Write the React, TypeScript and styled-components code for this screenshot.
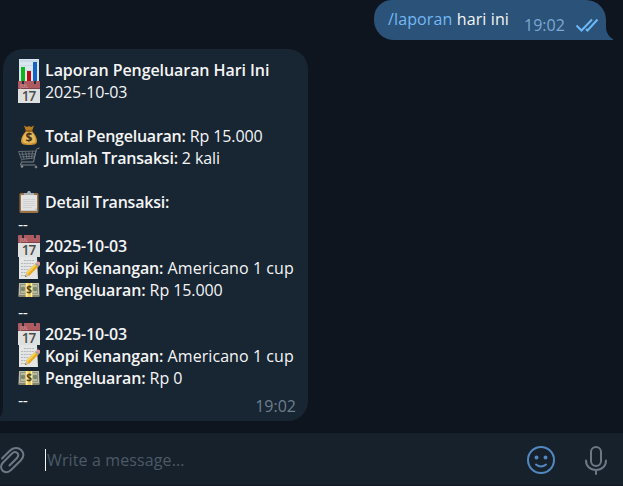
import React from "react";
import styled, { createGlobalStyle } from "styled-components";

const GlobalStyle = createGlobalStyle`
  * { box-sizing: border-box; }
  body { margin: 0; background: #0e151f; overflow: hidden; }
`;

const Window = styled.div`
  display: flex;
  flex-direction: column;
  width: 623px;
  height: 486px;
  background: #0e151f;
  color: #f5f5f5;
  font: 16px/22px "Open Sans", sans-serif;
  overflow: hidden;
`;

const History = styled.main`
  display: flex;
  flex-direction: column;
  gap: 9px;
  height: 432px;
  flex: none;
`;

const Outgoing = styled.div`
  position: relative;
  align-self: flex-end;
  display: flex;
  width: 232px;
  height: 40px;
  margin-right: 17px;
  padding: 8px 9px 0 14px;
  background: #2b5278;
  border-radius: 18px 20px 0 20px;
  white-space: pre;
  letter-spacing: 0.12px;
`;

const Command = styled.span`
  color: #73b9f5;
`;

const Time = styled.time<{ $out?: boolean }>`
  color: ${(p) => (p.$out ? "#7da8d3" : "#6d7f8f")};
  letter-spacing: 0;
  margin: ${(p) => (p.$out ? "6px 0 0 15px" : "0")};
`;

const Checks = styled.svg`
  flex: none;
  width: 24px;
  height: 16px;
  margin: 9px 0 0 10px;
`;

const Tail = styled.svg<{ $side: "left" | "right" }>`
  position: absolute;
  bottom: 0;
  width: 8px;
  height: 14px;
  ${(p) => (p.$side === "right" ? "left: 100%;" : "right: 100%; transform: scaleX(-1);")}
`;

const Incoming = styled.article`
  position: relative;
  width: 305px;
  height: 372px;
  margin-left: 3px;
  padding: 10px 15px 0 15px;
  background: #182533;
  border-radius: 20px 20px 20px 0;
`;

const Line = styled.div`
  display: flex;
  align-items: center;
  height: 22px;
  white-space: pre;
`;

const LastLine = styled(Line)`
  justify-content: space-between;
`;

const Stamp = styled.div`
  align-self: flex-start;
  margin: 6px -3px 0 0;
`;

const Strong = styled.strong<{ $track?: number }>`
  font-weight: 600;
  letter-spacing: ${(p) => p.$track ?? 0}px;
`;

const Plain = styled.span<{ $track?: number }>`
  letter-spacing: ${(p) => p.$track ?? 0}px;
`;

const Emoji = styled.svg`
  flex: none;
  width: 22px;
  height: 22px;
  margin-right: 5px;
`;

const Composer = styled.footer`
  display: flex;
  align-items: center;
  height: 54px;
  padding-top: 2px;
  background: #17212b;
  border-top: 1px solid #0c131b;
  border-bottom: 1px solid #101923;
`;

const Field = styled.div`
  flex: 1;
  display: flex;
  align-items: center;
  margin-left: 20px;
  color: #4b5967;
  letter-spacing: 0.12px;
`;

const Caret = styled.i`
  width: 1px;
  height: 22px;
  margin-right: 1px;
  background: #f5f5f5;
`;

const ToolIcon = styled.svg<{ $w: number; $tone: string; $end?: number }>`
  flex: none;
  width: ${(p) => p.$w}px;
  height: 30px;
  margin-right: ${(p) => p.$end ?? 0}px;
  fill: none;
  stroke: ${(p) => p.$tone};
  stroke-width: 2;
  stroke-linecap: round;
  stroke-linejoin: round;
`;

const Chart = () => (
  <Emoji viewBox="0 0 22 22">
    <path fill="#d9e5ef" d="M1 0h20v22H1z" />
    <path fill="#b5cbe0" d="M2 1h18v2H2zM2 6h18v1H2zM2 11h18v1H2z" opacity=".5" />
    <path fill="#0fb51c" d="M3 8h4v14H3z" />
    <path fill="#b80d16" d="M9 12h4v10H9z" />
    <path fill="#1264c4" d="M15 3h4v19h-4z" />
  </Emoji>
);

const CalendarDay = () => (
  <Emoji viewBox="0 0 22 22">
    <path fill="#dedfdf" d="M0 7h22v15H0z" />
    <path fill="#ad5b60" d="M0 1q0-1 1-1h20q1 0 1 1v7H0z" />
    <path fill="#854149" d="M0 7h22v1H0z" />
    <path fill="#252b35" d="M4 0h2v3H4zM16 0h2v3h-2z" />
    <text x="2" y="6.8" fontFamily="Open Sans" fontSize="5" fontWeight="600" fill="#d0979a">JUL</text>
    <text x="10.6" y="19.5" textAnchor="middle" fontFamily="Open Sans" fontSize="13.5" fontWeight="600" letterSpacing="-1" fill="#4b4b4b">17</text>
  </Emoji>
);

const MoneyBag = () => (
  <Emoji viewBox="0 0 22 22">
    <path fill="#b97d20" d="M6 .5l3 1.500 2-1 2 1 3-1.500-2 5.500H8z" />
    <path fill="#c98f30" d="M8 6h6c3 3 5 7 5 10 0 3-2 4-8 4s-8-1-8-4c0-3 2-7 5-10z" />
    <path fill="#e5b858" d="M8.500 7h5c3 3 4 6 4 8.500 0 2-2 3-6.500 3s-6.500-1-6.500-3c0-3 1-6 4-8.500z" />
    <path stroke="#815014" strokeWidth="1.2" d="M7 6h8" />
    <text x="11" y="17" textAnchor="middle" fontFamily="Open Sans" fontSize="12" fontWeight="700" fill="#46341d">$</text>
  </Emoji>
);

const Cart = () => (
  <Emoji viewBox="0 0 22 22" fill="none" stroke="#747b82" strokeWidth=".8">
    <path stroke="#969ca0" d="M21.5 1l-3 1-3 13H3.5l-1 3h15" />
    <path d="M.5 4.5l3 8L16 11l2-7zM1.5 7.3l15.500-.6M2.5 10l14-1M4 4.500l2 7.500M7.500 4.500L9 12M11 4.500v7.500M14.500 4l-1 7.500" />
    <path stroke="#684c47" d="M17 4l2-2M3 15l1-2" />
    <circle cx="4" cy="19.500" r="1" fill="#aaa" />
    <circle cx="18" cy="20" r="1" fill="#aaa" />
  </Emoji>
);

const Clipboard = () => (
  <Emoji viewBox="0 0 22 22">
    <rect x="1.500" y="2" width="19" height="20" rx="1.500" fill="#9b7242" />
    <path fill="#e2e2e2" d="M3 4h16v16H3z" />
    <path fill="#c6c8ca" d="M3 19h13l3-3v4H3z" />
    <path fill="#a8afb5" d="M6 2h3l1-2h2l1 2h3v2H6z" />
    <path stroke="#d0d1d3" d="M5 8.500h12M5 10.500h12M5 12.500h12M5 14.500h12M5 16.500h9" />
  </Emoji>
);

const Memo = () => (
  <Emoji viewBox="0 0 22 22">
    <path fill="#e4e5e5" d="M1 0h18l1 22H1z" />
    <path stroke="#a9adaf" strokeWidth=".8" strokeDasharray="2 .7" d="M6 3.500h10M3 6.500h13M3 9.500h11M3 12.500h8M3 15.500h5M3 18.500h4" />
    <path fill="#e7ad21" d="M8 16L18 6l3 3-10 10z" />
    <path fill="#ffd45a" d="M8.500 16L18 6.500l1 1L9.500 17z" />
    <path fill="#e59a9d" d="M18 6l1.500-1.500q1.500-.5 2.500 1t-.5 3L21 9z" />
    <path fill="#93a2ab" d="M17 7l1-1 3 3-1 1z" />
    <path fill="#d8b78a" d="M8 16l-1 4 4-1z" />
    <path fill="#4d4540" d="M7.500 18.500L7 20l1.500-.5z" />
  </Emoji>
);

const Cash = () => (
  <Emoji viewBox="0 0 22 22">
    <path fill="#b9bba5" d="M1 4h20l.5 13H.5z" />
    <path fill="#85886f" d="M.5 16h21v2H.5z" />
    <path fill="none" stroke="#858c75" strokeWidth=".8" d="M2.500 5.500h17v9h-17z" />
    <circle cx="5" cy="10" r="2.300" fill="#7b8570" />
    <circle cx="17" cy="10" r="2.300" fill="#7b8570" />
    <path fill="#eccb5c" d="M7.500 4h7v14h-7z" />
    <path fill="#fff0a7" d="M8 4h1.500v14H8zM13 4h1v14h-1z" />
    <text x="11" y="14" textAnchor="middle" fontFamily="Open Sans" fontSize="10" fontWeight="700" fill="#514424">$</text>
  </Emoji>
);

const BubbleTail = ({ side, fill }: { side: "left" | "right"; fill: string }) => (
  <Tail $side={side} viewBox="0 0 8 14">
    <path fill={fill} d="M0 0c0 6 2 10 6.500 12.800Q8 14 6 14H0z" />
  </Tail>
);

const Entry = ({ amount }: { amount: string }) => (
  <>
    <Line><Plain $track={-0.4}>--</Plain></Line>
    <Line><CalendarDay /><Strong $track={-0.15}>2025-10-03</Strong></Line>
    <Line><Memo /><Strong $track={-0.14}>Kopi Kenangan:</Strong><Plain $track={0.07}> Americano 1 cup</Plain></Line>
    <Line><Cash /><Strong $track={-0.12}>Pengeluaran:</Strong><Plain $track={-0.08}>{` ${amount}`}</Plain></Line>
  </>
);

export default function App() {
  return (
    <Window>
      <GlobalStyle />
      <History>
        <Outgoing>
          <Command>/laporan</Command> hari ini
          <Time $out>19:02</Time>
          <Checks viewBox="0 0 24 16" fill="none" stroke="#6cb9f7" strokeWidth="2">
            <path d="M1.500 8.500l5 5L17 2.500M11 12l1.500 1.500L22.500 2.500" />
          </Checks>
          <BubbleTail side="right" fill="#2b5278" />
        </Outgoing>
        <Incoming>
          <Line><Chart /><Strong $track={-0.07}>Laporan Pengeluaran Hari Ini</Strong></Line>
          <Line><CalendarDay /><Plain $track={-0.12}>2025-10-03</Plain></Line>
          <Line />
          <Line><MoneyBag /><Strong $track={-0.24}>Total Pengeluaran:</Strong><Plain $track={-0.1}> Rp 15.000</Plain></Line>
          <Line><Cart /><Strong $track={-0.22}>Jumlah Transaksi:</Strong><Plain $track={-0.1}> 2 kali</Plain></Line>
          <Line />
          <Line><Clipboard /><Strong $track={-0.22}>Detail Transaksi:</Strong></Line>
          <Entry amount="Rp 15.000" />
          <Entry amount="Rp 0" />
          <LastLine><Plain $track={-0.4}>--</Plain><Stamp><Time>19:02</Time></Stamp></LastLine>
          <BubbleTail side="left" fill="#182533" />
        </Incoming>
      </History>
      <Composer>
        <ToolIcon $w={25} $tone="#6c7883" viewBox="0 0 25 30">
          <path d="M2 13.500l7.500-7.500c4-4 9-3.500 11.700-1 2.700 3 2.800 7-.5 10.500L11 25c-3 3-6.500 2.500-8.500.5s-2-5.500.5-8L12 8.500c2-2 4-1.500 5.300-.5 1.300 1.500 1.200 3.500-.5 5.200L9.500 20.500" />
        </ToolIcon>
        <Field><Caret />Write a message...</Field>
        <ToolIcon $w={30} $tone="#5288c1" $end={28} viewBox="0 0 30 30">
          <circle cx="15" cy="15" r="13" />
          <path d="M10 19.500q5 4 10 0" />
          <circle cx="10.500" cy="12.500" r="1" fill="#5288c1" />
          <circle cx="19.500" cy="12.500" r="1" fill="#5288c1" />
        </ToolIcon>
        <ToolIcon $w={24} $tone="#6c7883" $end={15} viewBox="0 0 24 30">
          <rect x="7" y="2" width="10" height="19" rx="5" />
          <path d="M2 15.500c0 5.500 4 9.500 10 9.500s10-4 10-9.500M12 25v4" />
        </ToolIcon>
      </Composer>
    </Window>
  );
}
